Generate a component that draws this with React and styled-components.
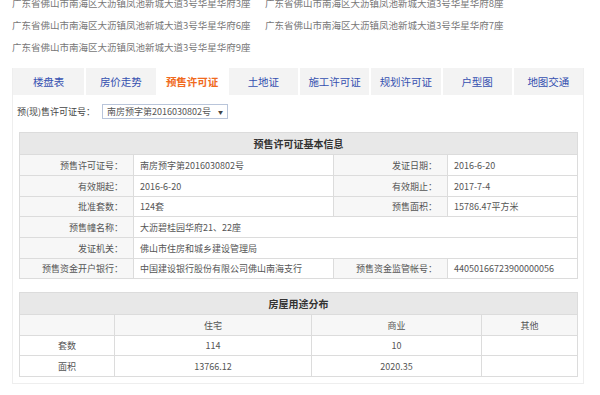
import React from "react";
import styled, { createGlobalStyle } from "styled-components";

const GlobalStyle = createGlobalStyle`
  html, body {
    margin: 0;
    padding: 0;
    background: #fff;
  }
  body {
    font-family: "Noto Sans CJK SC", "Noto Sans", sans-serif;
    color: #555;
  }
`;

const Page = styled.div`
  width: 600px;
  height: 395px;
  overflow: hidden;
`;

const AddressList = styled.div`
  display: grid;
  grid-template-columns: 253px 1fr;
  margin-top: -8px;
  padding-left: 12px;
  font-size: 9.5px;
  line-height: 22px;
  color: #777;
  white-space: nowrap;
`;

const Panel = styled.div`
  margin: 10px 16px 0 12px;
  border: 1px solid #eee;
  border-top: none;
  padding-bottom: 6px;
`;

const Tabs = styled.div`
  display: grid;
  grid-template-columns: repeat(8, 1fr);
  background: #f3f3f3;
  height: 27px;
`;

const Tab = styled.div`
  display: flex;
  align-items: center;
  justify-content: center;
  font-size: 10.5px;
  color: ${(p) => (p.$active ? "#f06a1d" : "#3550b0")};
  font-weight: ${(p) => (p.$active ? 700 : 400)};
  background: ${(p) => (p.$active ? "#fff" : "transparent")};
  border-left: ${(p) => (p.$first ? "none" : "2px solid #fff")};
`;

const PickRow = styled.div`
  display: flex;
  align-items: center;
  gap: 7px;
  height: 30px;
  padding: 0 0 0 4px;
  margin-top: 1px;
  font-size: 9px;
  color: #444;
`;

const Select = styled.div`
  display: flex;
  align-items: center;
  justify-content: space-between;
  width: 116px;
  height: 13px;
  padding: 0 4px;
  border: 1px solid #b9c5da;
  font-size: 9px;
  color: #555;
  background: #fff;

  span.arrow {
    font-size: 5px;
    color: #444;
  }
`;

const Table = styled.table`
  border-collapse: collapse;
  table-layout: fixed;
  width: 558px;
  margin: ${(p) => p.$margin || "0"};
  margin-left: 6px;
  font-size: 9px;

  td, th {
    border: 1px solid #dcdcdc;
    padding: 0 6px;
    white-space: nowrap;
    overflow: hidden;
  }
`;

const HeadCell = styled.th`
  background: #e8e8e8;
  color: #333;
  font-size: 10px;
  font-weight: 700;
  height: 21px;
  text-align: center;
`;

const Label = styled.td`
  background: #f7f7f7;
  text-align: right;
  padding-right: 10px !important;
  color: #555;
`;

const Value = styled.td`
  background: #fff;
  color: #555;
  text-align: left;
`;

const Row = styled.tr`
  height: ${(p) => p.$h || 20}px;
  background: ${(p) => (p.$shade ? "#f7f7f7" : "#fff")};
`;

const Cell = styled.td`
  text-align: center;
  color: #555;
`;

const addresses = [
  "广东省佛山市南海区大沥镇凤池新城大道3号华星华府3座",
  "广东省佛山市南海区大沥镇凤池新城大道3号华星华府8座",
  "广东省佛山市南海区大沥镇凤池新城大道3号华星华府6座",
  "广东省佛山市南海区大沥镇凤池新城大道3号华星华府7座",
  "广东省佛山市南海区大沥镇凤池新城大道3号华星华府9座",
];

const tabs = ["楼盘表", "房价走势", "预售许可证", "土地证", "施工许可证", "规划许可证", "户型图", "地图交通"];

export default function App() {
  return (
    <Page>
      <GlobalStyle />
      <AddressList>
        {addresses.map((a) => (
          <div key={a}>{a}</div>
        ))}
      </AddressList>
      <Panel>
        <Tabs>
          {tabs.map((t, i) => (
            <Tab key={t} $active={t === "预售许可证"} $first={i === 0}>
              {t}
            </Tab>
          ))}
        </Tabs>
        <PickRow>
          <span>预(现)售许可证号：</span>
          <Select>
            <span>南房预字第2016030802号</span>
            <span className="arrow">▼</span>
          </Select>
        </PickRow>
        <Table $margin="6px 0 0">
          <colgroup>
            <col style={{ width: 114 }} />
            <col style={{ width: 200 }} />
            <col style={{ width: 114 }} />
            <col style={{ width: 130 }} />
          </colgroup>
          <thead>
            <tr>
              <HeadCell colSpan={4}>预售许可证基本信息</HeadCell>
            </tr>
          </thead>
          <tbody>
            <Row $h={21}>
              <Label>预售许可证号：</Label>
              <Value>南房预字第2016030802号</Value>
              <Label>发证日期：</Label>
              <Value>2016-6-20</Value>
            </Row>
            <Row $h={21}>
              <Label>有效期起：</Label>
              <Value>2016-6-20</Value>
              <Label>有效期止：</Label>
              <Value>2017-7-4</Value>
            </Row>
            <Row $h={20}>
              <Label>批准套数：</Label>
              <Value>124套</Value>
              <Label>预售面积：</Label>
              <Value>15786.47平方米</Value>
            </Row>
            <Row $h={21}>
              <Label>预售幢名称：</Label>
              <Value colSpan={3}>大沥碧桂园华府21、22座</Value>
            </Row>
            <Row $h={21}>
              <Label>发证机关：</Label>
              <Value colSpan={3}>佛山市住房和城乡建设管理局</Value>
            </Row>
            <Row $h={20}>
              <Label>预售资金开户银行：</Label>
              <Value>中国建设银行股份有限公司佛山南海支行</Value>
              <Label>预售资金监管帐号：</Label>
              <Value>44050166723900000056</Value>
            </Row>
          </tbody>
        </Table>
        <Table $margin="13px 0 0">
          <colgroup>
            <col style={{ width: 95 }} />
            <col style={{ width: 197 }} />
            <col style={{ width: 170 }} />
            <col style={{ width: 96 }} />
          </colgroup>
          <thead>
            <tr>
              <HeadCell colSpan={4}>房屋用途分布</HeadCell>
            </tr>
          </thead>
          <tbody>
            <Row $h={21} $shade>
              <Cell></Cell>
              <Cell>住宅</Cell>
              <Cell>商业</Cell>
              <Cell>其他</Cell>
            </Row>
            <Row $h={20}>
              <Cell>套数</Cell>
              <Cell>114</Cell>
              <Cell>10</Cell>
              <Cell></Cell>
            </Row>
            <Row $h={21}>
              <Cell>面积</Cell>
              <Cell>13766.12</Cell>
              <Cell>2020.35</Cell>
              <Cell></Cell>
            </Row>
          </tbody>
        </Table>
      </Panel>
    </Page>
  );
}
